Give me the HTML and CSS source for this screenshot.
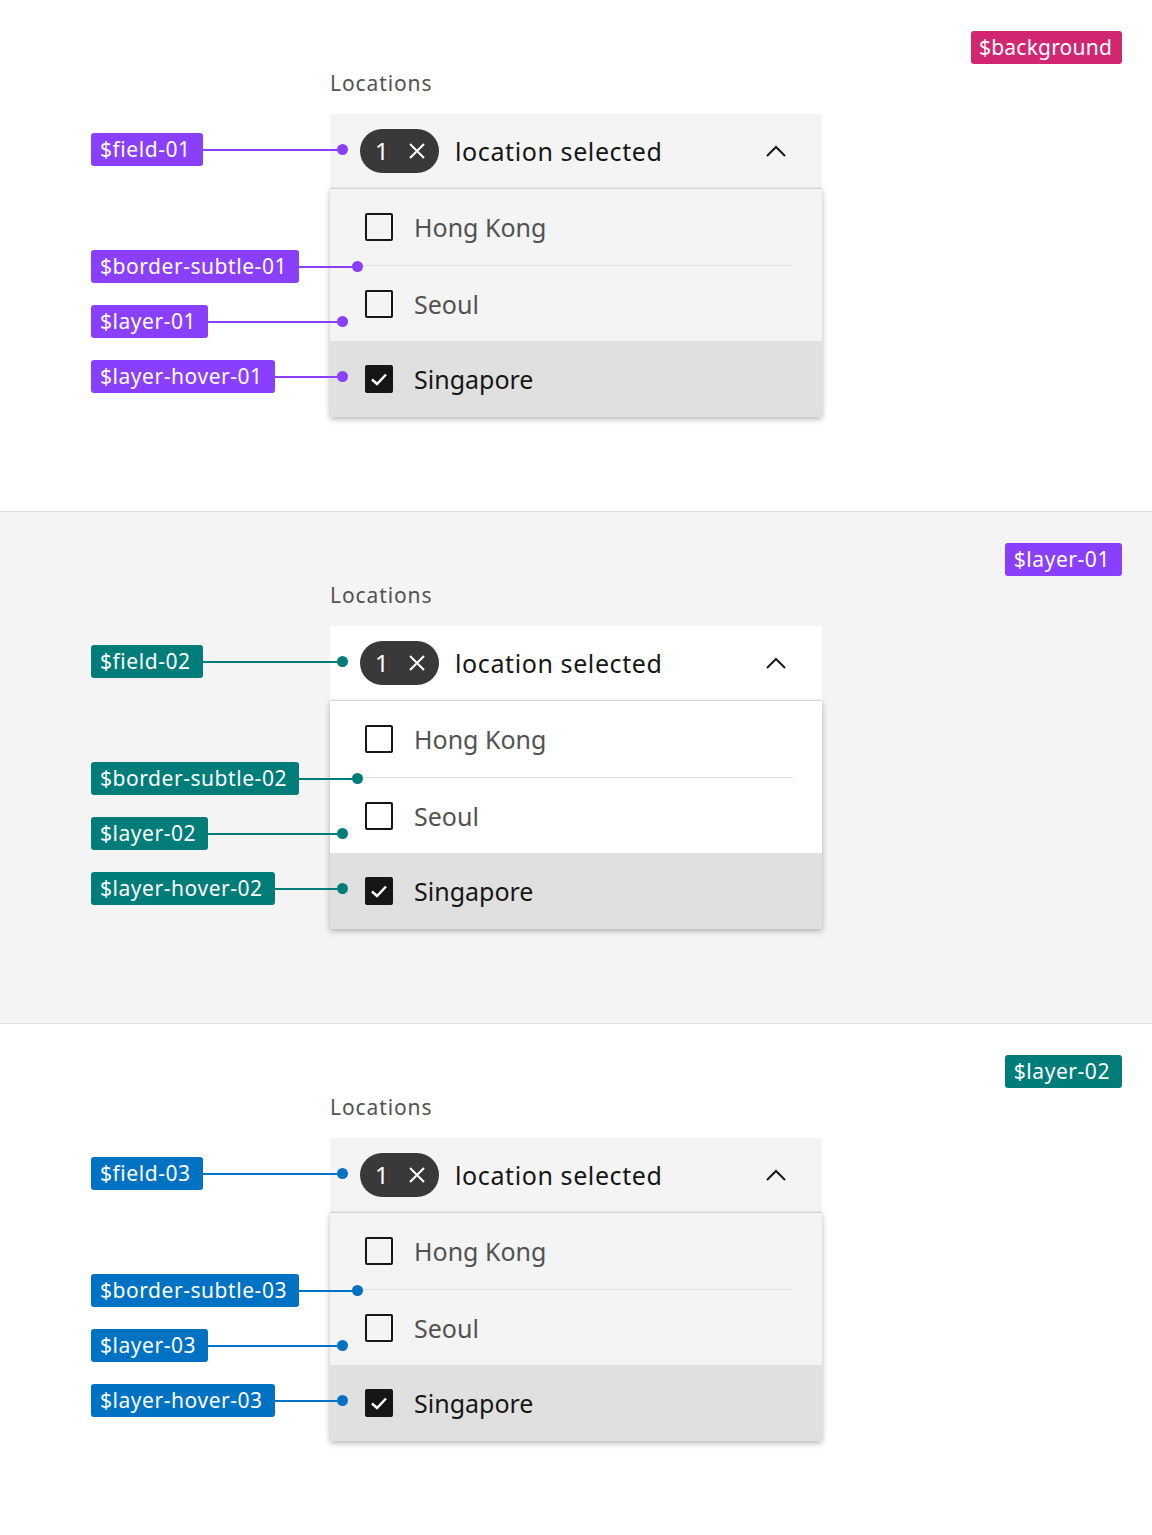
FILE: index.html
```html
<!DOCTYPE html>
<html lang="en">
<head>
<meta charset="utf-8">
<title>Multiselect layering tokens</title>
<link rel="stylesheet" href="styles.css">
</head>
<body>

<section class="panel panel-1">
  <div class="tag-row"><span class="token token-pink">$background</span></div>
  <div class="component">
    <div class="label">Locations</div>
    <div class="dropdown">
      <div class="field">
        <span class="pill">1<svg class="x" viewBox="0 0 18 18"><path d="M2 2 L16 16 M16 2 L2 16"/></svg></span>
        <span class="value">location selected</span>
        <svg class="chev" viewBox="0 0 20 12"><path d="M1 11 L10 2 L19 11"/></svg>
      </div>
      <div class="menu">
        <div class="item"><span class="box"></span><span class="txt">Hong Kong</span></div>
        <div class="divider"></div>
        <div class="item item-2"><span class="box"></span><span class="txt">Seoul</span></div>
        <div class="item item-hover"><span class="box box-on"><svg viewBox="0 0 28 28"><path d="M7 14.5 L12 19 L21 9.5"/></svg></span><span class="txt txt-on">Singapore</span></div>
      </div>
      <div class="callout c-field purple"><span class="token">$field-01</span><span class="line"></span><span class="dot"></span></div>
      <div class="callout c-border purple"><span class="token">$border-subtle-01</span><span class="line"></span><span class="dot"></span></div>
      <div class="callout c-layer purple"><span class="token">$layer-01</span><span class="line"></span><span class="dot"></span></div>
      <div class="callout c-hover purple"><span class="token">$layer-hover-01</span><span class="line"></span><span class="dot"></span></div>
    </div>
  </div>
</section>

<section class="panel panel-2">
  <div class="tag-row"><span class="token token-purple">$layer-01</span></div>
  <div class="component">
    <div class="label">Locations</div>
    <div class="dropdown">
      <div class="field">
        <span class="pill">1<svg class="x" viewBox="0 0 18 18"><path d="M2 2 L16 16 M16 2 L2 16"/></svg></span>
        <span class="value">location selected</span>
        <svg class="chev" viewBox="0 0 20 12"><path d="M1 11 L10 2 L19 11"/></svg>
      </div>
      <div class="menu">
        <div class="item"><span class="box"></span><span class="txt">Hong Kong</span></div>
        <div class="divider"></div>
        <div class="item item-2"><span class="box"></span><span class="txt">Seoul</span></div>
        <div class="item item-hover"><span class="box box-on"><svg viewBox="0 0 28 28"><path d="M7 14.5 L12 19 L21 9.5"/></svg></span><span class="txt txt-on">Singapore</span></div>
      </div>
      <div class="callout c-field teal"><span class="token">$field-02</span><span class="line"></span><span class="dot"></span></div>
      <div class="callout c-border teal"><span class="token">$border-subtle-02</span><span class="line"></span><span class="dot"></span></div>
      <div class="callout c-layer teal"><span class="token">$layer-02</span><span class="line"></span><span class="dot"></span></div>
      <div class="callout c-hover teal"><span class="token">$layer-hover-02</span><span class="line"></span><span class="dot"></span></div>
    </div>
  </div>
</section>

<section class="panel panel-3">
  <div class="tag-row"><span class="token token-teal">$layer-02</span></div>
  <div class="component">
    <div class="label">Locations</div>
    <div class="dropdown">
      <div class="field">
        <span class="pill">1<svg class="x" viewBox="0 0 18 18"><path d="M2 2 L16 16 M16 2 L2 16"/></svg></span>
        <span class="value">location selected</span>
        <svg class="chev" viewBox="0 0 20 12"><path d="M1 11 L10 2 L19 11"/></svg>
      </div>
      <div class="menu">
        <div class="item"><span class="box"></span><span class="txt">Hong Kong</span></div>
        <div class="divider"></div>
        <div class="item item-2"><span class="box"></span><span class="txt">Seoul</span></div>
        <div class="item item-hover"><span class="box box-on"><svg viewBox="0 0 28 28"><path d="M7 14.5 L12 19 L21 9.5"/></svg></span><span class="txt txt-on">Singapore</span></div>
      </div>
      <div class="callout c-field blue"><span class="token">$field-03</span><span class="line"></span><span class="dot"></span></div>
      <div class="callout c-border blue"><span class="token">$border-subtle-03</span><span class="line"></span><span class="dot"></span></div>
      <div class="callout c-layer blue"><span class="token">$layer-03</span><span class="line"></span><span class="dot"></span></div>
      <div class="callout c-hover blue"><span class="token">$layer-hover-03</span><span class="line"></span><span class="dot"></span></div>
    </div>
  </div>
</section>

</body>
</html>
```

FILE: styles.css
```css
* { box-sizing: border-box; }

html, body {
  margin: 0;
  padding: 0;
}

body {
  font-family: "Noto Sans", "Open Sans", Arial, sans-serif;
  color: #161616;
  width: 1152px;
}

.panel {
  height: 512px;
  border-bottom: 1px solid #e0e0e0;
}
.panel-1 { background: #ffffff; }
.panel-2 { background: #f4f4f4; }
.panel-3 { background: #ffffff; border-bottom: none; }

.tag-row {
  display: flex;
  justify-content: flex-end;
  padding: 31px 30px 0 0;
  height: 64px;
}

.token {
  display: inline-flex;
  align-items: center;
  height: 33px;
  padding: 0 12px 1px 9px;
  border-radius: 3px;
  color: #ffffff;
  font-size: 21px;
  letter-spacing: 0.55px;
  white-space: nowrap;
}
.token-pink { background: #d12771; letter-spacing: 0.2px; padding: 0 10px 1px 8px; }
.token-purple { background: #8a3ffc; }
.token-teal { background: #007d79; }

.component {
  margin-left: 330px;
  width: 492px;
}

.label {
  margin-top: 6px;
  height: 26px;
  line-height: 26px;
  font-size: 21px;
  color: #525252;
  letter-spacing: 0.9px;
  margin-bottom: 18px;
}

.dropdown {
  position: relative;
}

.field {
  display: flex;
  align-items: center;
  height: 75px;
  padding: 0 36px 1px 30px;
  border-bottom: 1px solid #e0e0e0;
  background: #f4f4f4;
}
.panel-2 .field { background: #ffffff; }

.pill {
  display: inline-flex;
  align-items: center;
  height: 44px;
  width: 79px;
  padding: 0 0 0 15px;
  border-radius: 22px;
  background: #393939;
  color: #ffffff;
  font-size: 24px;
  line-height: 1;
}
.pill .x {
  width: 18px;
  height: 18px;
  margin-left: 19px;
  fill: none;
  stroke: #ffffff;
  stroke-width: 2;
}

.value {
  margin-left: 16px;
  font-size: 25px;
  color: #161616;
  flex: 1;
  letter-spacing: 0.6px;
}

.chev {
  width: 20px;
  height: 12px;
  fill: none;
  stroke: #161616;
  stroke-width: 2;
}

.menu {
  background: #f4f4f4;
  box-shadow: 0 2px 6px rgba(0, 0, 0, 0.3);
}
.panel-2 .menu { background: #ffffff; }

.item {
  display: flex;
  align-items: center;
  height: 76px;
  padding-left: 35px;
}
.item-2 { height: 75px; }
.item-hover { background: #e0e0e0; }

.divider {
  height: 1px;
  margin: 0 29px 0 28px;
  background: #e0e0e0;
}
.panel-3 .divider { margin-right: 31px; }

.box {
  width: 28px;
  height: 28px;
  border: 2px solid #161616;
  border-radius: 2px;
  flex: none;
}
.box-on {
  background: #161616;
  display: flex;
  align-items: center;
  justify-content: center;
}
.box-on svg {
  width: 28px;
  height: 28px;
  margin: -2px;
  fill: none;
  stroke: #ffffff;
  stroke-width: 2.4;
}

.txt {
  margin-left: 21px;
  font-size: 25px;
  color: #525252;
  letter-spacing: 0;
}
.txt-on { color: #161616; }

/* annotation callouts layered over the diagram */
.callout {
  position: absolute;
  left: -239px;
  display: flex;
  align-items: center;
  height: 33px;
}
.callout .line {
  flex: 1;
  height: 2px;
}
.callout .dot {
  width: 11px;
  height: 11px;
  border-radius: 50%;
  flex: none;
}
.c-field { top: 19px; width: 257px; }
.c-border { top: 136px; width: 272px; }
.c-layer { top: 191px; width: 257px; }
.c-hover { top: 246px; width: 257px; }

.purple .token, .purple .line, .purple .dot { background: #8a3ffc; }
.teal .token, .teal .line, .teal .dot { background: #007d79; }
.blue .token, .blue .line, .blue .dot { background: #0072c3; }
```
